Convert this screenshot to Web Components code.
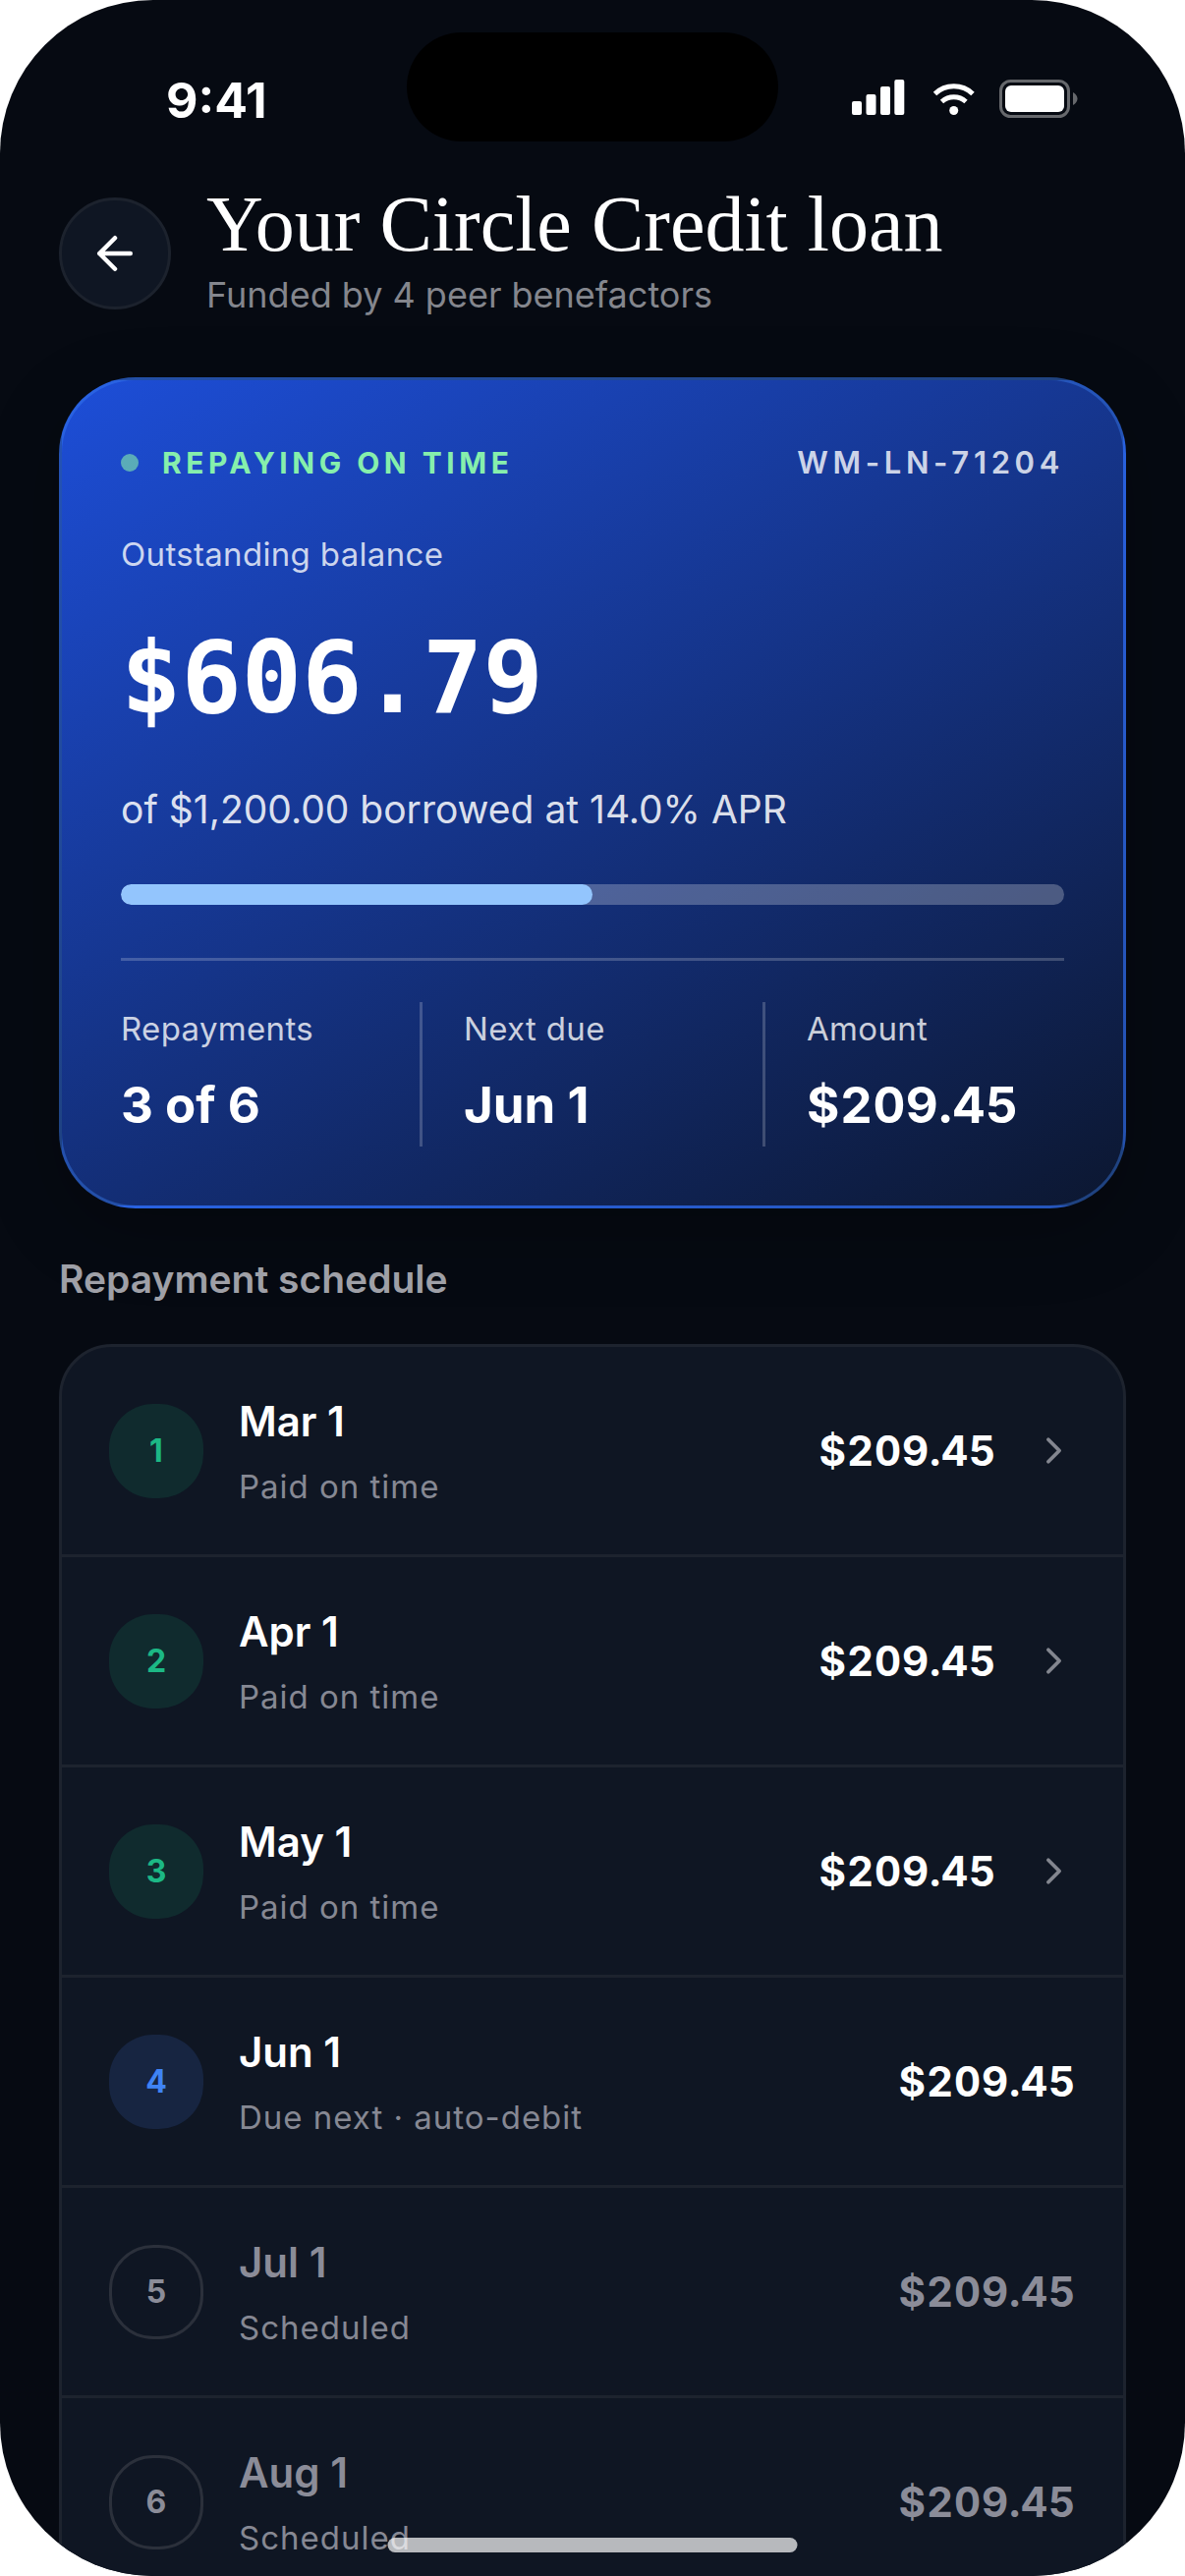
<!DOCTYPE html>
<html lang="en">
<head>
<meta charset="utf-8">
<meta name="viewport" content="width=device-width, initial-scale=1">
<title>Your Circle Credit loan</title>
<style>
  body { margin: 0; background: #fff; font-family: Inter, "Liberation Sans", sans-serif; }
</style>
</head>
<body>
<phone-screen>
  <status-bar slot="status" time="9:41"></status-bar>
  <page-header>
    Your Circle Credit loan
    <span slot="subtitle">Funded by 4 peer benefactors</span>
  </page-header>
  <loan-card status="Repaying on time" reference="WM-LN-71204" progress="50">
    <span slot="label">Outstanding balance</span>
    <span slot="balance">$606.79</span>
    <span slot="terms">of $1,200.00 borrowed at 14.0% APR</span>
    <loan-stat slot="stats" label="Repayments">3 of 6</loan-stat>
    <loan-stat slot="stats" label="Next due">Jun 1</loan-stat>
    <loan-stat slot="stats" label="Amount" numeric>$209.45</loan-stat>
  </loan-card>
  <repayment-schedule heading="Repayment schedule">
    <schedule-row number="1" state="paid" date="Mar 1" amount="$209.45">Paid on time</schedule-row>
    <schedule-row number="2" state="paid" date="Apr 1" amount="$209.45">Paid on time</schedule-row>
    <schedule-row number="3" state="paid" date="May 1" amount="$209.45">Paid on time</schedule-row>
    <schedule-row number="4" state="next" date="Jun 1" amount="$209.45">Due next · auto-debit</schedule-row>
    <schedule-row number="5" state="scheduled" date="Jul 1" amount="$209.45">Scheduled</schedule-row>
    <schedule-row number="6" state="scheduled" date="Aug 1" amount="$209.45">Scheduled</schedule-row>
  </repayment-schedule>
</phone-screen>

<script>
const define = (name, render) => customElements.define(name, class extends HTMLElement {
  connectedCallback() {
    if (this.shadowRoot) return;
    this.attachShadow({ mode: 'open' }).innerHTML = render(this);
  }
});

define('phone-screen', () => `
  <style>
    :host {
      display: block; position: relative; height: 100vh; overflow: hidden;
      border-radius: 156px; background: #060a12; color: #fff;
    }
    main { padding: 0 60px; }
    .home {
      position: absolute; left: 50%; bottom: 24px; width: 417px; height: 15px;
      transform: translateX(-50%); border-radius: 8px; background: rgba(255, 255, 255, .7);
    }
  </style>
  <slot name="status"></slot>
  <main><slot></slot></main>
  <div class="home"></div>`);

define('status-bar', el => `
  <style>
    :host {
      display: grid; grid-template-columns: 1fr 378px 1fr; align-items: start;
      height: 168px; padding-top: 33px; box-sizing: border-box;
    }
    .time { padding: 36px 0 0 169px; font-size: 50px; line-height: 66px; font-weight: 700; }
    .island { height: 111px; border-radius: 56px; background: #000; }
    .icons { display: flex; justify-content: flex-end; padding: 48px 109px 0 0; }
    svg { display: block; }
  </style>
  <div class="time">${el.getAttribute('time')}</div>
  <div class="island"></div>
  <div class="icons">
    <svg width="230" height="39" viewBox="0 0 230 39" fill="#fff" role="img" aria-label="Signal, Wi-Fi and battery">
      <rect x="0" y="22" width="10" height="14" rx="2"/>
      <rect x="14.5" y="15" width="10" height="21" rx="2"/>
      <rect x="29" y="7" width="10" height="29" rx="2"/>
      <rect x="43.3" y="0" width="10" height="36" rx="2"/>
      <g fill="none" stroke="#fff" stroke-width="5">
        <path d="M84.5 14.5a28 28 0 0 1 38.500 0"/>
        <path d="M91.500 22.500a18.500 18.500 0 0 1 24.500 0"/>
      </g>
      <circle cx="103.700" cy="31.500" r="4.500"/>
      <rect x="151.500" y="1.500" width="69" height="36" rx="10" fill="none" stroke="#66686c" stroke-width="3"/>
      <rect x="156" y="6" width="60" height="27" rx="6"/>
      <path d="M225 13c2 1 4.500 3.500 4.500 6.500s-2.500 5.500-4.500 6.500z" fill="#66686c"/>
    </svg>
  </div>`);

define('page-header', () => `
  <style>
    :host { display: flex; align-items: center; gap: 36px; padding: 21px 0 57px; }
    button {
      display: grid; place-items: center; flex: none; width: 114px; height: 114px; padding: 0;
      border: 3px solid #1c222d; border-radius: 50%; background: #0f1623; color: #fff;
    }
    h1 { margin: 0; font: 400 80px/78px "Liberation Serif", serif; }
    p { margin: 6px 0 0; font-size: 36px; line-height: 54px; color: #84868d; }
  </style>
  <button type="button" aria-label="Back">
    <svg width="54" height="54" viewBox="0 0 24 24" fill="none" stroke="currentColor" stroke-width="2" stroke-linecap="round" stroke-linejoin="round"><path d="M19 12H5M12 19l-7-7 7-7"/></svg>
  </button>
  <div><h1><slot></slot></h1><p><slot name="subtitle"></slot></p></div>`);

define('loan-card', el => `
  <style>
    :host {
      display: block; padding: 60px; border: 3px solid rgba(59, 130, 246, .4); border-radius: 78px;
      background: linear-gradient(150deg, #1d4ed8, #0c1730);
      box-shadow: 0 24px 72px rgba(0, 0, 0, .25);
    }
    .top { display: flex; align-items: center; justify-content: space-between; line-height: 48px; }
    .status {
      display: flex; align-items: center; gap: 24px; color: #86efac;
      font-size: 30px; font-weight: 700; letter-spacing: .15em; text-transform: uppercase;
    }
    .status::before { content: ""; width: 18px; height: 18px; border-radius: 50%; background: currentColor; opacity: .6; }
    .reference { font-size: 31px; font-weight: 600; letter-spacing: .15em; color: rgba(255, 255, 255, .8); }
    .label { margin-top: 45px; font-size: 33px; line-height: 48px; letter-spacing: .01em; color: rgba(255, 255, 255, .78); }
    .balance { margin-top: 42px; font: 700 102px/120px "DejaVu Sans Mono", monospace; }
    .terms { margin-top: 45px; font-size: 39px; line-height: 57px; color: rgba(255, 255, 255, .87); }
    .track { margin-top: 48px; height: 21px; border-radius: 11px; overflow: hidden; background: rgba(255, 255, 255, .25); }
    .fill { width: ${el.getAttribute('progress')}%; height: 100%; border-radius: inherit; background: #93c5fd; }
    .stats { display: flex; margin-top: 54px; padding-top: 42px; border-top: 3px solid rgba(255, 255, 255, .2); }
  </style>
  <div class="top">
    <span class="status">${el.getAttribute('status')}</span>
    <span class="reference">${el.getAttribute('reference')}</span>
  </div>
  <div class="label"><slot name="label"></slot></div>
  <div class="balance"><slot name="balance"></slot></div>
  <div class="terms"><slot name="terms"></slot></div>
  <div class="track" role="progressbar" aria-label="Repaid" aria-valuenow="${el.getAttribute('progress')}"><div class="fill"></div></div>
  <div class="stats"><slot name="stats"></slot></div>`);

define('loan-stat', el => `
  <style>
    :host { display: block; flex: 1 1 0; padding: 0 42px 3px; border-left: 3px solid rgba(255, 255, 255, .2); }
    :host(:first-of-type) { padding-left: 0; border-left: 0; }
    :host(:last-of-type) { padding-right: 0; }
    .label { font-size: 33px; line-height: 54px; letter-spacing: .01em; color: rgba(255, 255, 255, .78); }
    .value { margin-top: 12px; font-size: 51px; line-height: 78px; font-weight: 700; white-space: nowrap; }
    :host([numeric]) .value { letter-spacing: .01em; font-variant-numeric: tabular-nums; }
  </style>
  <div class="label">${el.getAttribute('label')}</div>
  <div class="value"><slot></slot></div>`);

define('repayment-schedule', el => `
  <style>
    :host { display: block; margin-top: 48px; }
    h2 { margin: 0 0 42px; font-size: 39px; line-height: 48px; font-weight: 600; color: #9fa0a7; }
    .list { border: 3px solid #1d232e; border-radius: 54px; overflow: hidden; background: #0f1623; }
  </style>
  <h2>${el.getAttribute('heading')}</h2>
  <div class="list"><slot></slot></div>`);

define('schedule-row', el => {
  const paid = el.getAttribute('state') === 'paid';
  const tag = paid ? 'a href="#"' : 'div';
  return `
  <style>
    :host { display: block; border-top: 3px solid #1d232e; }
    :host(:first-child) { border-top: 0; }
    .row { display: flex; align-items: center; gap: 36px; height: 211px; padding: 0 48px; color: inherit; text-decoration: none; }
    .badge {
      display: grid; place-items: center; flex: none; box-sizing: border-box; width: 96px; height: 96px;
      border-radius: 45px; font-size: 32px; font-weight: 700;
    }
    .text { flex: 1; }
    .date { font-size: 42px; line-height: 60px; font-weight: 600; }
    .note { margin-top: 12px; font-size: 33px; line-height: 48px; letter-spacing: .03em; color: #868893; }
    .amount { font-size: 42px; line-height: 60px; font-weight: 700; letter-spacing: .02em; font-variant-numeric: tabular-nums; }
    svg { display: block; flex: none; color: #83868f; }
    :host([state="paid"]) .badge { background: #102b2e; color: #1cb885; }
    :host([state="next"]) .badge { background: #172541; color: #3f83f5; }
    :host([state="scheduled"]) .badge { border: 3px solid #2b303b; color: #8b8c98; }
    :host([state="scheduled"]) :is(.date, .amount) { color: #8b8c98; }
  </style>
  <${tag} class="row">
    <span class="badge">${el.getAttribute('number')}</span>
    <div class="text"><div class="date">${el.getAttribute('date')}</div><div class="note"><slot></slot></div></div>
    <span class="amount">${el.getAttribute('amount')}</span>
    ${paid ? '<svg width="45" height="45" viewBox="0 0 24 24" fill="none" stroke="currentColor" stroke-width="2" stroke-linecap="round" stroke-linejoin="round"><path d="M9 18l6-6-6-6"/></svg>' : ''}
  </${paid ? 'a' : 'div'}>`;
});
</script>
</body>
</html>
